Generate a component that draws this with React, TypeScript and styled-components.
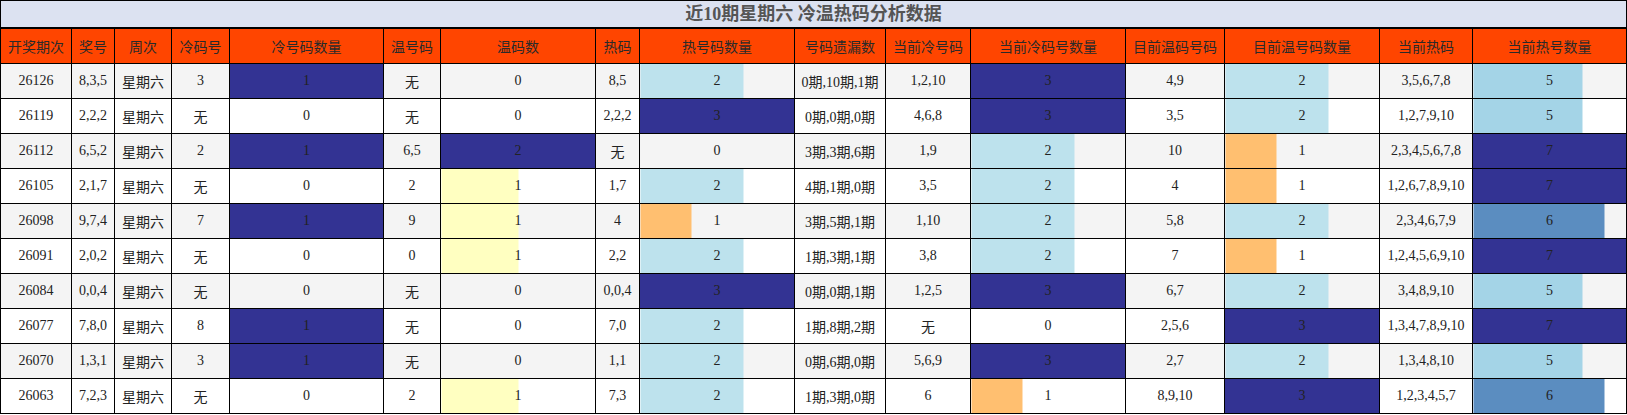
import React from "react";
import styled, { createGlobalStyle } from "styled-components";

const GlobalStyle = createGlobalStyle`
  html, body { margin: 0; padding: 0; background: #ffffff; }
  body { font-family: "Liberation Serif", "Noto Sans CJK SC", serif; }
`;

const Table = styled.table`
  width: 1627px;
  table-layout: fixed;
  border-collapse: collapse;
  font-family: "Liberation Serif", "Noto Sans CJK SC", serif;
  font-size: 14px;
  color: #222;
`;

const TitleCell = styled.th`
  height: 26px;
  padding: 0;
  border: 1px solid #000;
  border-bottom-width: 2px;
  background: #dce2f1;
  color: #555;
  font-size: 18px;
  font-weight: bold;
  line-height: 26px;
  text-align: center;
  vertical-align: middle;
`;

const HeadCell = styled.th`
  height: 34px;
  padding: 0;
  border: 1px solid #000;
  background: #ff4500;
  color: #2a2a2a;
  font-weight: normal;
  font-size: 14px;
  text-align: center;
  vertical-align: middle;
  white-space: nowrap;
`;

const Row = styled.tr<{ $odd: boolean }>`
  background: ${(p) => (p.$odd ? "#f4f4f4" : "#ffffff")};
`;

const Cell = styled.td`
  height: 34px;
  padding: 0;
  border: 1px solid #000;
  text-align: center;
  vertical-align: middle;
  white-space: nowrap;
  color: #222;
`;

const BarCell = styled(Cell)<{ $color: string; $pct: number }>`
  background: ${(p) =>
    p.$pct > 0
      ? `linear-gradient(to right, ${p.$color} 0, ${p.$color} ${p.$pct}%, transparent ${p.$pct}%)`
      : "transparent"};
`;

const widths = [71, 43, 57, 58, 154, 57, 155, 44, 155, 91, 85, 155, 99, 155, 93, 154];
const headers = [
  "开奖期次", "奖号", "周次", "冷码号", "冷号码数量", "温号码", "温码数", "热码",
  "热号码数量", "号码遗漏数", "当前冷号码", "当前冷码号数量", "目前温码号码",
  "目前温号码数量", "当前热码", "当前热号数量",
];

// column index -> max value for data bar
const barMax: Record<number, number> = { 4: 1, 6: 2, 8: 3, 11: 3, 13: 3, 15: 7 };

const rows: (string | number)[][] = [
  ["26126", "8,3,5", "星期六", "3", 1, "无", 0, "8,5", 2, "0期,10期,1期", "1,2,10", 3, "4,9", 2, "3,5,6,7,8", 5],
  ["26119", "2,2,2", "星期六", "无", 0, "无", 0, "2,2,2", 3, "0期,0期,0期", "4,6,8", 3, "3,5", 2, "1,2,7,9,10", 5],
  ["26112", "6,5,2", "星期六", "2", 1, "6,5", 2, "无", 0, "3期,3期,6期", "1,9", 2, "10", 1, "2,3,4,5,6,7,8", 7],
  ["26105", "2,1,7", "星期六", "无", 0, "2", 1, "1,7", 2, "4期,1期,0期", "3,5", 2, "4", 1, "1,2,6,7,8,9,10", 7],
  ["26098", "9,7,4", "星期六", "7", 1, "9", 1, "4", 1, "3期,5期,1期", "1,10", 2, "5,8", 2, "2,3,4,6,7,9", 6],
  ["26091", "2,0,2", "星期六", "无", 0, "0", 1, "2,2", 2, "1期,3期,1期", "3,8", 2, "7", 1, "1,2,4,5,6,9,10", 7],
  ["26084", "0,0,4", "星期六", "无", 0, "无", 0, "0,0,4", 3, "0期,0期,1期", "1,2,5", 3, "6,7", 2, "3,4,8,9,10", 5],
  ["26077", "7,8,0", "星期六", "8", 1, "无", 0, "7,0", 2, "1期,8期,2期", "无", 0, "2,5,6", 3, "1,3,4,7,8,9,10", 7],
  ["26070", "1,3,1", "星期六", "3", 1, "无", 0, "1,1", 2, "0期,6期,0期", "5,6,9", 3, "2,7", 2, "1,3,4,8,10", 5],
  ["26063", "7,2,3", "星期六", "无", 0, "2", 1, "7,3", 2, "1期,3期,0期", "6", 1, "8,9,10", 3, "1,2,3,4,5,7", 6],
];

function barColor(ratio: number): string {
  if (ratio >= 0.99) return "#333393";
  if (ratio >= 0.8) return "#5b8dc0";
  if (ratio >= 0.7) return "#a4d4e7";
  if (ratio >= 0.6) return "#bde2ed";
  if (ratio >= 0.45) return "#ffffc1";
  return "#ffbf70";
}

export default function App() {
  return (
    <>
      <GlobalStyle />
      <Table>
        <colgroup>
          {widths.map((w, i) => (
            <col key={i} style={{ width: w }} />
          ))}
        </colgroup>
        <thead>
          <tr>
            <TitleCell colSpan={16}>近10期星期六 冷温热码分析数据</TitleCell>
          </tr>
          <tr>
            {headers.map((h) => (
              <HeadCell key={h}>{h}</HeadCell>
            ))}
          </tr>
        </thead>
        <tbody>
          {rows.map((r, ri) => (
            <Row key={ri} $odd={ri % 2 === 0}>
              {r.map((v, ci) => {
                const max = barMax[ci];
                if (max !== undefined) {
                  const ratio = (v as number) / max;
                  return (
                    <BarCell key={ci} $color={barColor(ratio)} $pct={Math.round(ratio * 1000) / 10}>
                      {v}
                    </BarCell>
                  );
                }
                return <Cell key={ci}>{v}</Cell>;
              })}
            </Row>
          ))}
        </tbody>
      </Table>
    </>
  );
}
